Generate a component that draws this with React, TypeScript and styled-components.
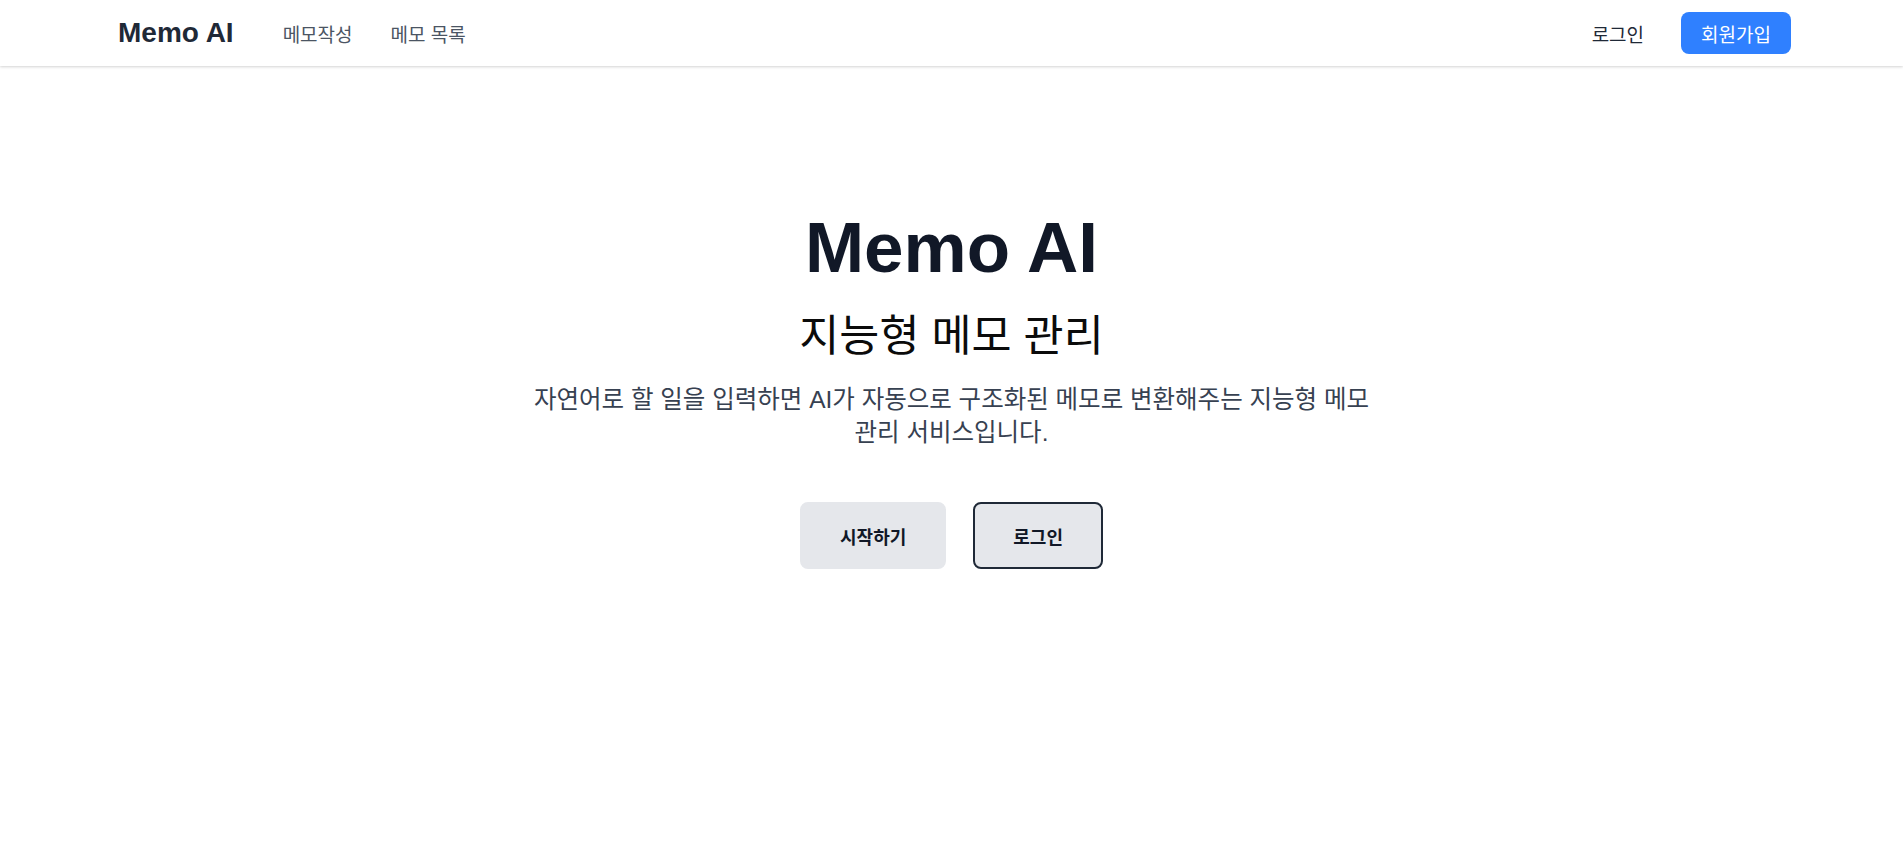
import React from "react";
import styled, { createGlobalStyle } from "styled-components";

const GlobalStyle = createGlobalStyle`
  * {
    box-sizing: border-box;
  }
  html,
  body {
    margin: 0;
    padding: 0;
    background: #ffffff;
    font-family: "Liberation Sans", "Noto Sans CJK KR", sans-serif;
    color: #111827;
  }
`;

const Page = styled.div`
  min-height: 100vh;
  display: flex;
  flex-direction: column;
`;

const Header = styled.header`
  height: 66px;
  background: #ffffff;
  box-shadow: 0 1px 3px rgba(0, 0, 0, 0.12), 0 1px 2px rgba(0, 0, 0, 0.06);
  display: flex;
  align-items: center;
  justify-content: space-between;
  padding: 0 112px 0 118px;
`;

const HeaderLeft = styled.div`
  display: flex;
  align-items: center;
  gap: 38px;
`;

const Logo = styled.a`
  font-size: 28px;
  font-weight: 700;
  color: #1f2937;
  text-decoration: none;
  margin-right: 11px;
`;

const NavLink = styled.a`
  font-size: 19px;
  color: #4b5563;
  text-decoration: none;
`;

const HeaderRight = styled.div`
  display: flex;
  align-items: center;
  gap: 37px;
`;

const LoginLink = styled.a`
  font-size: 19px;
  color: #1f2937;
  text-decoration: none;
`;

const SignupButton = styled.button`
  height: 42px;
  padding: 0 20px;
  border: none;
  border-radius: 8px;
  background: #2f80ff;
  color: #ffffff;
  font-family: inherit;
  font-size: 19px;
  cursor: pointer;
`;

const Hero = styled.main`
  display: flex;
  flex-direction: column;
  align-items: center;
  text-align: center;
  padding-top: 147px;
`;

const Title = styled.h1`
  margin: 0;
  font-size: 71px;
  line-height: 70px;
  font-weight: 700;
  color: #111827;
`;

const Subtitle = styled.h2`
  margin: 27px 0 0 0;
  font-size: 43.5px;
  line-height: 52px;
  font-weight: 400;
  color: #0b0b0b;
`;

const Description = styled.p`
  margin: 21px 0 0 0;
  max-width: 860px;
  font-size: 24.5px;
  line-height: 33px;
  color: #374151;
`;

const Actions = styled.div`
  display: flex;
  gap: 27px;
  margin-top: 53px;
`;

const HeroButton = styled.button<{ $outlined?: boolean }>`
  height: 67px;
  padding: 0 38px;
  border-radius: 8px;
  background: #e5e7eb;
  border: 2px solid ${(p) => (p.$outlined ? "#1f2937" : "#e5e7eb")};
  color: #111827;
  font-family: inherit;
  font-size: 18px;
  font-weight: 700;
  cursor: pointer;
`;

export default function App() {
  return (
    <Page>
      <GlobalStyle />
      <Header>
        <HeaderLeft>
          <Logo href="#">Memo AI</Logo>
          <NavLink href="#">메모작성</NavLink>
          <NavLink href="#">메모 목록</NavLink>
        </HeaderLeft>
        <HeaderRight>
          <LoginLink href="#">로그인</LoginLink>
          <SignupButton>회원가입</SignupButton>
        </HeaderRight>
      </Header>
      <Hero>
        <Title>Memo AI</Title>
        <Subtitle>지능형 메모 관리</Subtitle>
        <Description>
          자연어로 할 일을 입력하면 AI가 자동으로 구조화된 메모로 변환해주는
          지능형 메모 관리 서비스입니다.
        </Description>
        <Actions>
          <HeroButton>시작하기</HeroButton>
          <HeroButton $outlined>로그인</HeroButton>
        </Actions>
      </Hero>
    </Page>
  );
}
